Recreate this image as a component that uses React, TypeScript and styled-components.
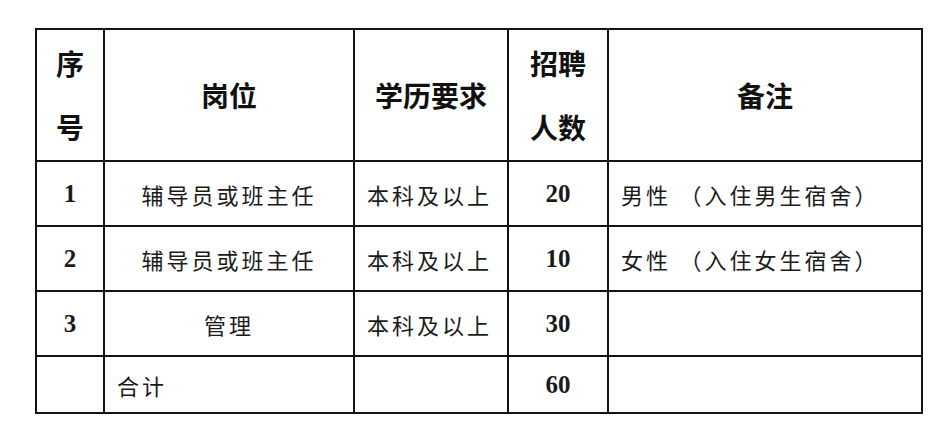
import React from 'react';
import styled, { createGlobalStyle } from 'styled-components';

const GlobalStyle = createGlobalStyle`
  html, body {
    margin: 0;
    padding: 0;
    background: #fff;
  }
`;

interface Row {
  no: string;
  post: string;
  edu: string;
  count: string;
  note: string;
  leftPost?: boolean;
}

const rows: Row[] = [
  { no: '1', post: '辅导员或班主任', edu: '本科及以上', count: '20', note: '男性 （入住男生宿舍）' },
  { no: '2', post: '辅导员或班主任', edu: '本科及以上', count: '10', note: '女性 （入住女生宿舍）' },
  { no: '3', post: '管理', edu: '本科及以上', count: '30', note: '' },
  { no: '', post: '合计', edu: '', count: '60', note: '', leftPost: true },
];

const Page = styled.div`
  padding: 28px 0 0 35px;
`;

const Grid = styled.div`
  display: grid;
  width: 884px;
  grid-template-columns: 66px 248px 152px 98px 312px;
  grid-template-rows: 130px 63px 63px 63px 55px;
  gap: 2px;
  border: 2px solid #141414;
  background: #141414;
`;

const Head = styled.div`
  background: #fff;
  display: flex;
  align-items: center;
  justify-content: center;
  text-align: center;
  font-family: 'Noto Sans CJK SC', 'Noto Sans', sans-serif;
  font-weight: 700;
  font-size: 28px;
  line-height: 64px;
  color: #111;
`;

const Cell = styled.div<{ $align?: 'left' | 'center'; $num?: boolean }>`
  background: #fff;
  display: flex;
  align-items: center;
  justify-content: ${(p) => (p.$align === 'left' ? 'flex-start' : 'center')};
  padding: ${(p) => (p.$align === 'left' ? '0 0 0 12px' : '0')};
  font-family: ${(p) =>
    p.$num
      ? "'Liberation Serif', serif"
      : "'Liberation Serif', 'Noto Sans CJK SC', serif"};
  font-size: ${(p) => (p.$num ? '25px' : '22px')};
  font-weight: ${(p) => (p.$num ? 700 : 400)};
  letter-spacing: ${(p) => (p.$num ? '0' : '3px')};
  color: #1a1a1a;
  white-space: pre;
`;

export default function App() {
  return (
    <Page>
      <GlobalStyle />
      <Grid>
        <Head>
          序<br />号
        </Head>
        <Head>岗位</Head>
        <Head>学历要求</Head>
        <Head>
          招聘<br />人数
        </Head>
        <Head>备注</Head>
        {rows.map((r, i) => (
          <React.Fragment key={i}>
            <Cell $num>{r.no}</Cell>
            <Cell $align={r.leftPost ? 'left' : 'center'}>{r.post}</Cell>
            <Cell $align="left">{r.edu}</Cell>
            <Cell $num>{r.count}</Cell>
            <Cell $align="left">{r.note}</Cell>
          </React.Fragment>
        ))}
      </Grid>
    </Page>
  );
}
